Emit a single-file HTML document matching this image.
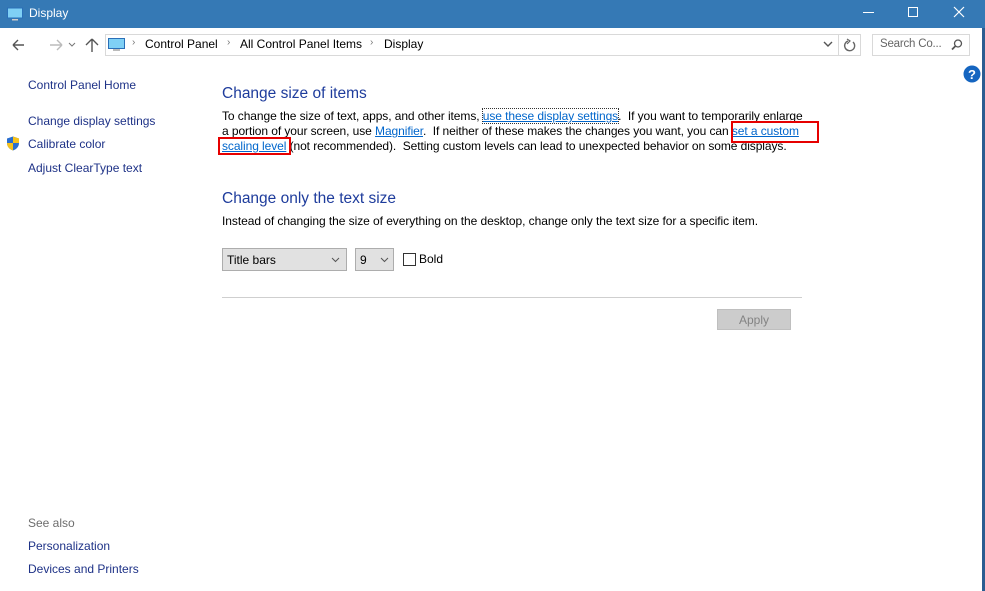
<!DOCTYPE html>
<html><head><meta charset="utf-8"><style>
*{margin:0;padding:0;box-sizing:border-box}
body{width:985px;height:591px;overflow:hidden;background:#fff;font-family:"Liberation Sans",sans-serif;font-size:12px;color:#000;position:relative}
.a{position:absolute;white-space:nowrap}
.lnk{color:#0066cc;text-decoration:underline}
.nav{color:#1e3287;font-size:12px}
h2{font-weight:normal;color:#1e3c9c;font-size:15.5px}
.box{position:absolute;border:2px solid #e60000}
</style></head><body>
<div class="a" style="left:0;top:0;width:985px;height:28px;background:#3579b5"></div>
<svg class="a" style="left:7px;top:7px" width="16" height="14"><rect x="0.5" y="1" width="15" height="10" fill="#7fd0f5" stroke="#2a6fb8"/><rect x="5" y="12" width="6" height="1.5" fill="#ccc"/></svg>
<div class="a" style="left:29px;top:6px;color:#fff;font-size:12px">Display</div>
<div class="a" style="left:863px;top:12px;width:11px;height:1px;background:#fff"></div>
<div class="a" style="left:908px;top:7px;width:10px;height:10px;border:1px solid #fff"></div>
<svg class="a" style="left:953px;top:6px" width="12" height="12"><path d="M1 1L11 11M11 1L1 11" stroke="#fff" stroke-width="1.2"/></svg>
<div class="a" style="left:982px;top:28px;width:3px;height:563px;background:#2b5d91"></div>
<svg class="a" style="left:10px;top:37px" width="90" height="16" fill="none" stroke-width="1.4"><path d="M3 8H14M3 8L8 3M3 8L8 13" stroke="#555"/><path d="M40 8H52M52 8L47 3M52 8L47 13" stroke="#bbb"/><path d="M59 6L62 9L65 6" stroke="#777" stroke-width="1"/><path d="M82 2V15M82 2L76 8M82 2L88 8" stroke="#555"/></svg>
<div class="a" style="left:105px;top:34px;width:734px;height:22px;border:1px solid #d9d9d9"></div>
<div class="a" style="left:838px;top:34px;width:23px;height:22px;border:1px solid #d9d9d9"></div>
<svg class="a" style="left:108px;top:38px" width="18" height="14"><rect x="0.5" y="0.5" width="16" height="10" fill="#7fd0f5" stroke="#2a6fb8"/><rect x="5" y="11" width="7" height="2" fill="#bbb"/></svg>
<div class="a" style="left:132px;top:37px;color:#777;font-size:10px">›</div>
<div class="a" style="left:145px;top:37px">Control Panel</div>
<div class="a" style="left:227px;top:37px;color:#777;font-size:10px">›</div>
<div class="a" style="left:240px;top:37px">All Control Panel Items</div>
<div class="a" style="left:370px;top:37px;color:#777;font-size:10px">›</div>
<div class="a" style="left:384px;top:37px">Display</div>
<svg class="a" style="left:823px;top:40px" width="10" height="8"><path d="M1 2L5 6L9 2" stroke="#555" fill="none" stroke-width="1.4"/></svg>
<svg class="a" style="left:843px;top:38px" width="14" height="14"><path d="M10 4A5 5 0 1 1 5 3" stroke="#666" fill="none" stroke-width="1.4"/><path d="M4 1L7 3L4 6" stroke="#666" fill="none" stroke-width="1.2"/></svg>
<div class="a" style="left:872px;top:34px;width:98px;height:22px;border:1px solid #d9d9d9"></div>
<div class="a" style="left:880px;top:38px;color:#666;font-size:11.5px;letter-spacing:-0.2px">Search Co...</div>
<svg class="a" style="left:950px;top:38px" width="14" height="14"><circle cx="8" cy="5.5" r="3.5" stroke="#555" fill="none" stroke-width="1.3"/><path d="M5.5 8L2 11.5" stroke="#555" stroke-width="1.8"/></svg>
<svg class="a" style="left:963px;top:65px" width="18" height="18"><circle cx="9" cy="9" r="8.5" fill="#1565c0"/><text x="9" y="14" font-size="13" font-weight="bold" fill="#fff" text-anchor="middle" font-family="Liberation Sans">?</text></svg>
<div class="a nav" style="left:28px;top:78px">Control Panel Home</div>
<div class="a nav" style="left:28px;top:114px">Change display settings</div>
<svg class="a" style="left:6px;top:136px" width="14" height="15"><path d="M7 0.5L13 2.5V7C13 11 10 13.5 7 14.5C4 13.5 1 11 1 7V2.5Z" fill="#2a6fd0"/><path d="M7 0.5L13 2.5V7H7ZM7 7H1C1 11 4 13.5 7 14.5Z" fill="#f6c21a"/></svg>
<div class="a nav" style="left:28px;top:137px">Calibrate color</div>
<div class="a nav" style="left:28px;top:161px">Adjust ClearType text</div>
<div class="a" style="left:28px;top:516px;color:#6d6d6d">See also</div>
<div class="a nav" style="left:28px;top:539px">Personalization</div>
<div class="a nav" style="left:28px;top:562px">Devices and Printers</div>
<h2 class="a" style="left:222px;top:85px">Change size of items</h2>
<div class="a" style="left:222px;top:109px;line-height:15px;letter-spacing:-0.08px">To change the size of text, apps, and other items, <span class="lnk" style="outline:1px dotted #333">use these display settings</span>.&nbsp; If you want to temporarily enlarge<br>a portion of your screen, use <span class="lnk">Magnifier</span>.&nbsp; If neither of these makes the changes you want, you can <span class="lnk">set a custom</span><br><span class="lnk">scaling level</span> (not recommended).&nbsp; Setting custom levels can lead to unexpected behavior on some displays.</div>
<div class="box" style="left:731px;top:121px;width:88px;height:22px"></div>
<div class="box" style="left:218px;top:137px;width:73px;height:18px"></div>
<h2 class="a" style="left:222px;top:190px">Change only the text size</h2>
<div class="a" style="left:222px;top:214px;letter-spacing:-0.06px">Instead of changing the size of everything on the desktop, change only the text size for a specific item.</div>
<div class="a" style="left:222px;top:248px;width:125px;height:23px;background:#e1e1e1;border:1px solid #adadad;padding:4px 0 0 4px">Title bars</div>
<svg class="a" style="left:331px;top:257px" width="9" height="6"><path d="M1 1L4.5 4.5L8 1" stroke="#555" fill="none"/></svg>
<div class="a" style="left:355px;top:248px;width:39px;height:23px;background:#e1e1e1;border:1px solid #adadad;padding:4px 0 0 4px">9</div>
<svg class="a" style="left:380px;top:257px" width="9" height="6"><path d="M1 1L4.5 4.5L8 1" stroke="#555" fill="none"/></svg>
<div class="a" style="left:403px;top:253px;width:13px;height:13px;border:1px solid #333"></div>
<div class="a" style="left:419px;top:252px">Bold</div>
<div class="a" style="left:222px;top:297px;width:580px;height:1px;background:#cfcfcf"></div>
<div class="a" style="left:717px;top:309px;width:74px;height:21px;background:#cccccc;border:1px solid #bfbfbf;color:#838383;text-align:center;padding-top:3px">Apply</div>
</body></html>
